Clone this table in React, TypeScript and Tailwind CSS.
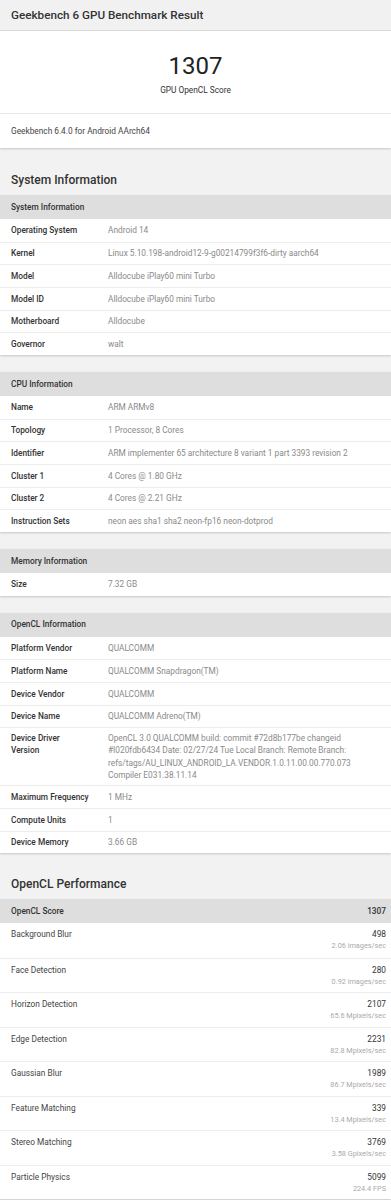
import React from "react";

type Row = [string, string];

const systemRows: Row[] = [
  ["Operating System", "Android 14"],
  ["Kernel", "Linux 5.10.198-android12-9-g00214799f3f6-dirty aarch64"],
  ["Model", "Alldocube iPlay60 mini Turbo"],
  ["Model ID", "Alldocube iPlay60 mini Turbo"],
  ["Motherboard", "Alldocube"],
  ["Governor", "walt"],
];

const cpuRows: Row[] = [
  ["Name", "ARM ARMv8"],
  ["Topology", "1 Processor, 8 Cores"],
  ["Identifier", "ARM implementer 65 architecture 8 variant 1 part 3393 revision 2"],
  ["Cluster 1", "4 Cores @ 1.80 GHz"],
  ["Cluster 2", "4 Cores @ 2.21 GHz"],
  ["Instruction Sets", "neon aes sha1 sha2 neon-fp16 neon-dotprod"],
];

const memRows: Row[] = [["Size", "7.32 GB"]];

const openclRows: Row[] = [
  ["Platform Vendor", "QUALCOMM"],
  ["Platform Name", "QUALCOMM Snapdragon(TM)"],
  ["Device Vendor", "QUALCOMM"],
  ["Device Name", "QUALCOMM Adreno(TM)"],
  [
    "Device Driver Version",
    "OpenCL 3.0 QUALCOMM build: commit #72d8b177be changeid #I020fdb6434 Date: 02/27/24 Tue Local Branch: Remote Branch: refs/tags/AU_LINUX_ANDROID_LA.VENDOR.1.0.11.00.00.770.073 Compiler E031.38.11.14",
  ],
  ["Maximum Frequency", "1 MHz"],
  ["Compute Units", "1"],
  ["Device Memory", "3.66 GB"],
];

const perf: [string, string, string][] = [
  ["Background Blur", "498", "2.06 images/sec"],
  ["Face Detection", "280", "0.92 images/sec"],
  ["Horizon Detection", "2107", "65.6 Mpixels/sec"],
  ["Edge Detection", "2231", "82.8 Mpixels/sec"],
  ["Gaussian Blur", "1989", "86.7 Mpixels/sec"],
  ["Feature Matching", "339", "13.4 Mpixels/sec"],
  ["Stereo Matching", "3769", "3.58 Gpixels/sec"],
  ["Particle Physics", "5099", "224.4 FPS"],
];

function InfoTable({ title, rows }: { title: string; rows: Row[] }) {
  return (
    <div className="bg-white shadow-[0_1px_2px_rgba(0,0,0,0.18)]">
      <div className="h-[24px] flex items-center px-[11px] bg-[#dedede] text-[8.3px] font-medium text-[#333]">
        {title}
      </div>
      {rows.map(([k, v], i) => {
        const multi = k === "Device Driver Version";
        return (
          <div
            key={k}
            className={
              "flex min-h-[22.67px] " +
              (multi ? "items-start py-[4px] " : "items-center ") +
              (i > 0 ? "border-t border-[#ececec]" : "")
            }
          >
            <div className="w-[108px] shrink-0 pl-[11px] pr-[8px] text-[8.3px] leading-[12.3px] font-medium text-[#333]">
              {multi ? (
                <>
                  Device Driver
                  <br />
                  Version
                </>
              ) : (
                k
              )}
            </div>
            <div className="flex-1 pr-[20px] text-[8.3px] leading-[12.3px] text-[#8a8a8a] break-words">
              {v}
            </div>
          </div>
        );
      })}
    </div>
  );
}

export default function App() {
  return (
    <div
      className="w-[391px] min-h-[1200px] bg-[#f2f2f2] overflow-hidden"
      style={{ fontFamily: "Roboto, 'Liberation Sans', sans-serif" }}
    >
      {/* Header bar */}
      <div className="h-[31px] flex items-center px-[11px] bg-[#f1f1f1] border-b border-[#dcdcdc]">
        <span className="text-[11.7px] font-medium text-[#333] pt-[1px]">
          Geekbench 6 GPU Benchmark Result
        </span>
      </div>

      {/* Score card */}
      <div className="bg-white shadow-[0_1px_2px_rgba(0,0,0,0.18)]">
        <div className="h-[82px] flex flex-col items-center pt-[21px]">
          <div className="text-[24px] leading-[28px] text-[#222]">1307</div>
          <div className="mt-[4px] text-[8.3px] leading-[12px] text-[#333]">
            GPU OpenCL Score
          </div>
        </div>
        <div className="h-[35px] flex items-center px-[11px] border-t border-[#e6e6e6] text-[8.3px] text-[#444]">
          Geekbench 6.4.0 for Android AArch64
        </div>
      </div>

      <div className="h-[47px] pt-[24px] px-[11px] text-[12px] leading-[16px] font-medium text-[#333]">
        System Information
      </div>
      <InfoTable title="System Information" rows={systemRows} />
      <div className="h-[17px]" />
      <InfoTable title="CPU Information" rows={cpuRows} />
      <div className="h-[17px]" />
      <InfoTable title="Memory Information" rows={memRows} />
      <div className="h-[17px]" />
      <InfoTable title="OpenCL Information" rows={openclRows} />

      <div className="h-[46px] pt-[23px] px-[11px] text-[12px] leading-[16px] font-medium text-[#333]">
        OpenCL Performance
      </div>

      <div className="bg-white shadow-[0_1px_2px_rgba(0,0,0,0.18)]">
        <div className="h-[24px] flex items-center justify-between pl-[11px] pr-[5px] bg-[#dedede] text-[8.3px] font-medium text-[#333]">
          <span>OpenCL Score</span>
          <span>1307</span>
        </div>
        {perf.map(([name, score, sub], i) => (
          <div
            key={name}
            className={
              "h-[34.5px] flex justify-between pl-[11px] pr-[5px] pt-[5px] " +
              (i > 0 ? "border-t border-[#ececec]" : "")
            }
          >
            <div className="text-[8.3px] leading-[12px] text-[#444]">{name}</div>
            <div className="flex flex-col items-end">
              <div className="text-[8.3px] leading-[12px] text-[#333]">{score}</div>
              <div className="text-[7.3px] leading-[11px] text-[#aaa]">{sub}</div>
            </div>
          </div>
        ))}
      </div>
    </div>
  );
}
